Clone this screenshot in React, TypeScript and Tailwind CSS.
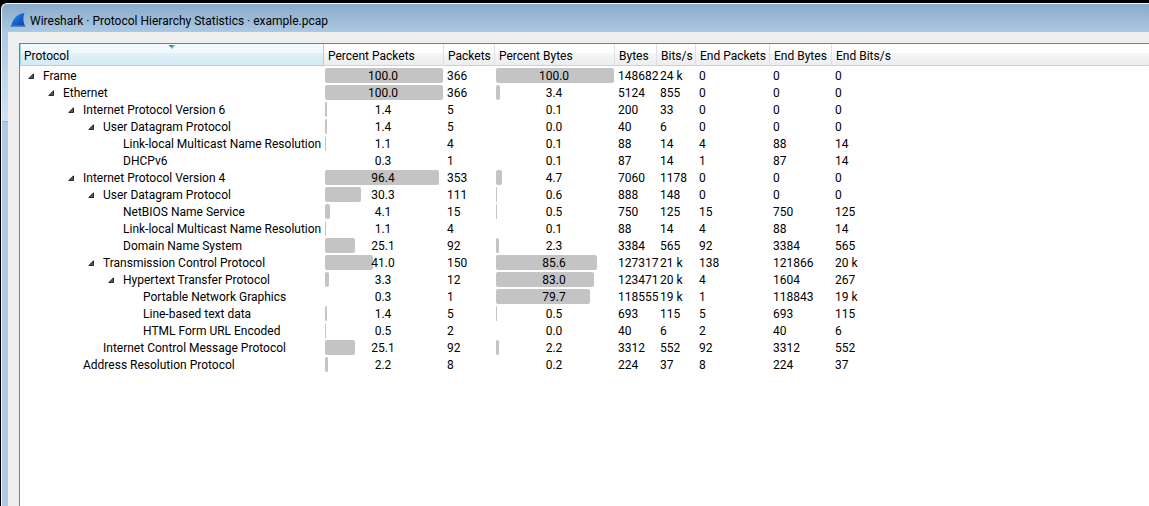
import React, { useState } from 'react';
import clsx from 'clsx';

interface ProtocolRow {
  name: string;
  depth: number;
  hasChildren?: boolean;
  percentPackets: number;
  packets: string;
  percentBytes: number;
  // bytes, bits/s, end packets, end bytes, end bits/s
  stats: string[];
}

const BAR_WIDTH = 118;

const HEADERS = [
  'Percent Packets',
  'Packets',
  'Percent Bytes',
  'Bytes',
  'Bits/s',
  'End Packets',
  'End Bytes',
  'End Bits/s',
];

const ROWS: ProtocolRow[] = [
  { name: 'Frame', depth: 0, hasChildren: true, percentPackets: 100, packets: '366', percentBytes: 100, stats: ['148682', '24 k', '0', '0', '0'] },
  { name: 'Ethernet', depth: 1, hasChildren: true, percentPackets: 100, packets: '366', percentBytes: 3.4, stats: ['5124', '855', '0', '0', '0'] },
  { name: 'Internet Protocol Version 6', depth: 2, hasChildren: true, percentPackets: 1.4, packets: '5', percentBytes: 0.1, stats: ['200', '33', '0', '0', '0'] },
  { name: 'User Datagram Protocol', depth: 3, hasChildren: true, percentPackets: 1.4, packets: '5', percentBytes: 0, stats: ['40', '6', '0', '0', '0'] },
  { name: 'Link-local Multicast Name Resolution', depth: 4, percentPackets: 1.1, packets: '4', percentBytes: 0.1, stats: ['88', '14', '4', '88', '14'] },
  { name: 'DHCPv6', depth: 4, percentPackets: 0.3, packets: '1', percentBytes: 0.1, stats: ['87', '14', '1', '87', '14'] },
  { name: 'Internet Protocol Version 4', depth: 2, hasChildren: true, percentPackets: 96.4, packets: '353', percentBytes: 4.7, stats: ['7060', '1178', '0', '0', '0'] },
  { name: 'User Datagram Protocol', depth: 3, hasChildren: true, percentPackets: 30.3, packets: '111', percentBytes: 0.6, stats: ['888', '148', '0', '0', '0'] },
  { name: 'NetBIOS Name Service', depth: 4, percentPackets: 4.1, packets: '15', percentBytes: 0.5, stats: ['750', '125', '15', '750', '125'] },
  { name: 'Link-local Multicast Name Resolution', depth: 4, percentPackets: 1.1, packets: '4', percentBytes: 0.1, stats: ['88', '14', '4', '88', '14'] },
  { name: 'Domain Name System', depth: 4, percentPackets: 25.1, packets: '92', percentBytes: 2.3, stats: ['3384', '565', '92', '3384', '565'] },
  { name: 'Transmission Control Protocol', depth: 3, hasChildren: true, percentPackets: 41, packets: '150', percentBytes: 85.6, stats: ['127317', '21 k', '138', '121866', '20 k'] },
  { name: 'Hypertext Transfer Protocol', depth: 4, hasChildren: true, percentPackets: 3.3, packets: '12', percentBytes: 83, stats: ['123471', '20 k', '4', '1604', '267'] },
  { name: 'Portable Network Graphics', depth: 5, percentPackets: 0.3, packets: '1', percentBytes: 79.7, stats: ['118555', '19 k', '1', '118843', '19 k'] },
  { name: 'Line-based text data', depth: 5, percentPackets: 1.4, packets: '5', percentBytes: 0.5, stats: ['693', '115', '5', '693', '115'] },
  { name: 'HTML Form URL Encoded', depth: 5, percentPackets: 0.5, packets: '2', percentBytes: 0, stats: ['40', '6', '2', '40', '6'] },
  { name: 'Internet Control Message Protocol', depth: 3, percentPackets: 25.1, packets: '92', percentBytes: 2.2, stats: ['3312', '552', '92', '3312', '552'] },
  { name: 'Address Resolution Protocol', depth: 2, percentPackets: 2.2, packets: '8', percentBytes: 0.2, stats: ['224', '37', '8', '224', '37'] },
];

const FinLogo = () => (
  <svg className="h-4 w-4 shrink-0" viewBox="0 0 16 16" aria-hidden="true">
    <defs>
      <linearGradient id="fin" x1="0" y1="0" x2="1" y2="1">
        <stop offset="0" stopColor="#3f9bf0" />
        <stop offset="0.5" stopColor="#1166d6" />
        <stop offset="1" stopColor="#0a3fa6" />
      </linearGradient>
    </defs>
    <path d="M1 14C3 7 7 1.5 14.5 1C13 5 12.8 9.5 15 14Z" fill="url(#fin)" />
    <path d="M0.5 13.5H15.5V15H0.5Z" fill="#5c86b4" />
  </svg>
);

const PercentCell = ({ value }: { value: number }) => (
  <td className="relative p-0 pt-0.5 pr-0.5 text-center">
    <span
      className="absolute top-px left-px h-[15px] rounded-xs bg-[#c4c4c4]"
      style={{ width: Math.round((value / 100) * BAR_WIDTH) }}
    />
    <span className="relative">{value.toFixed(1)}</span>
  </td>
);

export default function App() {
  const [collapsed, setCollapsed] = useState<number[]>([]);

  const toggle = (index: number) => {
    setCollapsed((prev) => (prev.includes(index) ? prev.filter((i) => i !== index) : [...prev, index]));
  };

  // a row is hidden when any of its ancestors is collapsed
  const isHidden = (index: number) => {
    let depth = ROWS[index].depth;
    for (let i = index - 1; i >= 0; i--) {
      if (ROWS[i].depth < depth) {
        if (collapsed.includes(i)) return true;
        depth = ROWS[i].depth;
      }
    }
    return false;
  };

  return (
    <div className="flex min-h-screen flex-col overflow-hidden bg-black pt-[3px] pl-px font-['Roboto','Noto_Sans',sans-serif] text-[12px] leading-[15px] text-black">
      <div className="flex flex-1 flex-col rounded-tl-md border-t border-l border-[#f2f6fa] bg-[#aecae3]">
        {/* Title bar */}
        <header className="flex h-7 shrink-0 items-center gap-1 rounded-tl-md bg-linear-to-b from-[#89aac9] to-[#abc9e4] pt-1 pl-2">
          <FinLogo />
          <h1 className="pt-0.5 whitespace-nowrap">Wireshark · Protocol Hierarchy Statistics · example.pcap</h1>
        </header>

        <div className="flex flex-1">
          <div className="w-1.5 shrink-0">
            <div className="h-[90px] border-b border-[#92b4d4] bg-linear-to-b from-[#abc9e4] to-[#d3e2f2]" />
          </div>

          <main className="flex flex-1 bg-[#eeeeee] pt-[11px] pl-[11px]">
            <div className="flex-1 border-t border-l border-[#7b7d82] bg-white">
              <table className="w-full table-fixed border-separate border-spacing-0 whitespace-nowrap">
                <colgroup>
                  <col className="w-[304px]" />
                  <col className="w-[120px]" />
                  <col className="w-[51px]" />
                  <col className="w-[120px]" />
                  <col className="w-[42px]" />
                  <col className="w-[39px]" />
                  <col className="w-[74px]" />
                  <col className="w-[62px]" />
                  <col />
                </colgroup>
                <thead>
                  <tr className="h-[22px]">
                    <th className="border-x border-b border-[#96d9f9] bg-[linear-gradient(#f2f9fc_0_9px,#e1f1f9_9px,#d3eaf5)] p-0 text-left font-normal" aria-sort="ascending">
                      <button type="button" className="relative flex h-[21px] w-full items-center pt-1 pl-[3px]">
                        <svg className="absolute top-px left-1/2 h-1 w-[7px] -translate-x-1/2" viewBox="0 0 7 4" aria-hidden="true">
                          <path d="M0 0H7L3.5 4Z" fill="#6fb4cf" />
                          <path d="M0 0H4L3 2Z" fill="#3c6e88" />
                        </svg>
                        Protocol
                      </button>
                    </th>
                    {HEADERS.map((label, i) => (
                      <th
                        key={label}
                        className={clsx(
                          'border-b border-b-[#d0d1d2] bg-[linear-gradient(#ffffff_0_9px,#f5f6f8_9px,#ecedee)] p-0 text-left font-normal',
                          i < HEADERS.length - 1 && 'border-r border-r-[#dfe0e1]'
                        )}
                      >
                        <button type="button" className="flex h-[21px] w-full items-center pt-1 pl-1">
                          {label}
                        </button>
                      </th>
                    ))}
                  </tr>
                </thead>
                <tbody className="before:block before:h-px">
                  {ROWS.map((row, index) =>
                    isHidden(index) ? null : (
                      <tr key={index} className="h-[17px]">
                        <td className="p-0 pt-0.5">
                          <div className="flex" style={{ paddingLeft: row.depth * 20 }}>
                            <div className="flex w-[23px] shrink-0 items-center pl-2">
                              {row.hasChildren && (
                                <button type="button" aria-label={`Toggle ${row.name}`} onClick={() => toggle(index)}>
                                  <svg className="block h-[7px] w-[7px]" viewBox="0 0 7 7" aria-hidden="true">
                                    {collapsed.includes(index) ? (
                                      <path d="M1.5 0.5L5 3.5L1.5 6.5Z" fill="white" stroke="#8a8a8a" />
                                    ) : (
                                      <path d="M5.5 0.8V5.5H0.8Z" fill="#595959" stroke="#262626" />
                                    )}
                                  </svg>
                                </button>
                              )}
                            </div>
                            {row.name}
                          </div>
                        </td>
                        <PercentCell value={row.percentPackets} />
                        <td className="p-0 pt-0.5 pl-[3px]">{row.packets}</td>
                        <PercentCell value={row.percentBytes} />
                        {row.stats.map((stat, i) => (
                          <td key={i} className="p-0 pt-0.5 pl-[3px]">
                            {stat}
                          </td>
                        ))}
                      </tr>
                    )
                  )}
                </tbody>
              </table>
            </div>
          </main>
        </div>
      </div>
    </div>
  );
}
